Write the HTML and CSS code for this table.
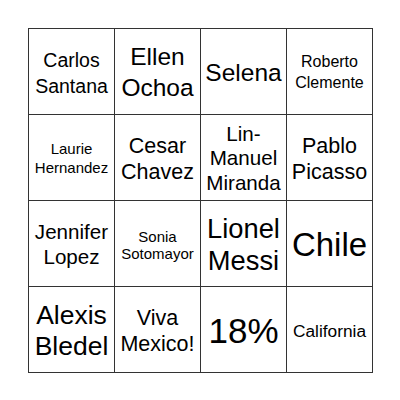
FILE: index.html
```html
<!DOCTYPE html>
<html>
<head>
<meta charset="utf-8">
<link rel="stylesheet" href="styles.css">
</head>
<body>
<div class="card">
  <div class="cell f19">Carlos<br>Santana</div>
  <div class="cell f24">Ellen<br>Ochoa</div>
  <div class="cell f24s">Selena</div>
  <div class="cell f15">Roberto<br>Clemente</div>

  <div class="cell f15h">Laurie<br>Hernandez</div>
  <div class="cell f21">Cesar<br>Chavez</div>
  <div class="cell f20">Lin-<br>Manuel<br>Miranda</div>
  <div class="cell f21">Pablo<br>Picasso</div>

  <div class="cell f20">Jennifer<br>Lopez</div>
  <div class="cell f15s">Sonia<br>Sotomayor</div>
  <div class="cell f27">Lionel<br>Messi</div>
  <div class="cell f33">Chile</div>

  <div class="cell f26">Alexis<br>Bledel</div>
  <div class="cell f21">Viva<br>Mexico!</div>
  <div class="cell f36">18%</div>
  <div class="cell f17">California</div>
</div>
</body>
</html>
```
FILE: styles.css
```css
html, body {
  margin: 0;
  padding: 0;
  background: #fff;
}
body {
  padding: 28px 0 0 28px;
  font-family: "Liberation Sans", Arial, sans-serif;
  color: #000;
}
.card {
  display: grid;
  grid-template-columns: repeat(4, 86px);
  grid-template-rows: repeat(4, 86px);
  width: max-content;
  border-top: 1px solid #333;
  border-left: 1px solid #333;
}
.cell {
  border-right: 1px solid #333;
  border-bottom: 1px solid #333;
  display: flex;
  align-items: center;
  justify-content: center;
  text-align: center;
  white-space: nowrap;
  padding-top: 2px;
}
.f19 { font-size: 19.5px; line-height: 26px; }
.f24 { font-size: 24.5px; line-height: 30.5px; }
.f24s { font-size: 24.5px; line-height: 28px; }
.f15 { font-size: 16px; line-height: 20.5px; }
.f15h { font-size: 15px; line-height: 18.5px; }
.f21 { font-size: 21.5px; line-height: 26px; }
.f20 { font-size: 20.6px; line-height: 24.3px; }
.f15s { font-size: 15px; line-height: 17px; }
.f27 { font-size: 27.3px; line-height: 31.5px; }
.f33 { font-size: 33px; line-height: 38px; }
.f26 { font-size: 26.5px; line-height: 31px; }
.f36 { font-size: 35px; line-height: 40px; }
.f17 { font-size: 17.3px; line-height: 20px; }
```
